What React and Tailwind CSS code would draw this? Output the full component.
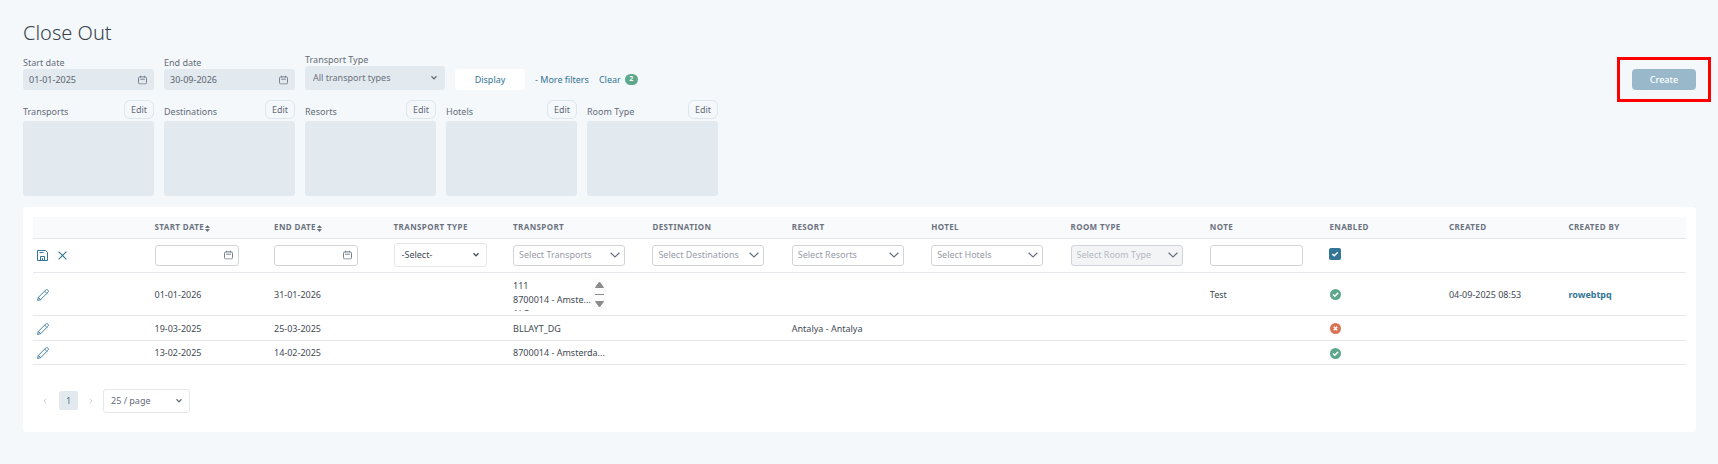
import React from "react";

function CalendarIcon({ right = "right-[6px]" }) {
  return (
    <svg className={`pointer-events-none absolute top-1/2 -translate-y-1/2 ${right}`} width="9" height="9" viewBox="0 0 9 9" fill="none" stroke="#77808d" strokeWidth="1" aria-hidden="true">
      <rect x="0.5" y="1.4" width="8" height="7.1" rx="1.3" />
      <path d="M2.5 0v2M6.5 0v2M2.2 3.7h4.6" />
    </svg>
  );
}

function Chevron({ small, right = "right-[8px]" }) {
  return small ? (
    <svg className={`pointer-events-none absolute top-1/2 -translate-y-1/2 ${right}`} width="6" height="5" viewBox="0 0 6 5" fill="none" stroke="currentColor" strokeWidth="1.3" aria-hidden="true">
      <path d="M0.5 0.8L3 3.4L5.5 0.8" />
    </svg>
  ) : (
    <svg className={`pointer-events-none absolute top-1/2 -translate-y-1/2 ${right}`} width="10" height="6" viewBox="0 0 10 6" fill="none" stroke="#667080" strokeWidth="1.2" aria-hidden="true">
      <path d="M0.6 0.8L5 5L9.4 0.8" />
    </svg>
  );
}

function SortIcon() {
  return (
    <svg className="ml-px inline-block" width="5" height="7" viewBox="0 0 5 7" fill="#6b7280" aria-hidden="true">
      <path d="M2.5 0L5 3H0Z M2.5 7L5 4H0Z" />
    </svg>
  );
}

function SaveIcon() {
  return (
    <svg width="11" height="11" viewBox="0 0 11 11" fill="none" stroke="#337596" strokeWidth="1" aria-hidden="true">
      <path d="M0.5 0.5H8.5L10.5 2.5V10.5H0.5Z" />
      <path d="M3.5 10.5V6.5H7.5V10.5M5.5 8v2M2.5 2.5h4" />
    </svg>
  );
}

function CloseIcon() {
  return (
    <svg width="9" height="9" viewBox="0 0 9 9" fill="none" stroke="#337596" strokeWidth="1.1" aria-hidden="true">
      <path d="M0.6 0.6L8.4 8.4M8.4 0.6L0.6 8.4" />
    </svg>
  );
}

function PencilIcon() {
  return (
    <svg width="12" height="12" viewBox="0 0 12 12" fill="none" stroke="#337596" strokeWidth="0.9" strokeLinejoin="round" aria-hidden="true">
      <path d="M0.6 11.4L1.3 8.4L8.7 1C9.3 0.4 10.2 0.4 10.9 1.1C11.6 1.8 11.6 2.7 11 3.3L3.6 10.7Z" />
      <path d="M7.6 2.1L9.9 4.4M1.3 8.4L3.6 10.7" />
    </svg>
  );
}

function Status({ ok }) {
  return (
    <svg className="ml-px block" width="11" height="11" viewBox="0 0 11 11" fill="none" stroke="white" strokeWidth="1.5" role="img" aria-label={ok ? "Enabled" : "Disabled"}>
      <circle cx="5.5" cy="5.5" r="5.5" fill={ok ? "#5da78a" : "#d87352"} stroke="none" />
      {ok ? <path d="M3 5.5L4.8 7.2L8.1 3.9" /> : <path d="M3.8 3.8L7.2 7.2M7.2 3.8L3.8 7.2" />}
    </svg>
  );
}

function DateFilter({ id, label, value }) {
  return (
    <div className="flex w-[131px] flex-col">
      <label htmlFor={id} className="leading-[13px]">{label}</label>
      <div className="relative">
        <input id={id} type="text" defaultValue={value} className="block h-[21px] w-full rounded-[3px] bg-[#e2eaef] pl-[6px] pr-5 text-[#5b6470] outline-none" />
        <CalendarIcon right="right-[7px]" />
      </div>
    </div>
  );
}

function ListFilter({ label }) {
  return (
    <section className="w-[131px]">
      <div className="flex h-[21px] items-start justify-between">
        <h2 className="pt-[5px] leading-[14px]">{label}</h2>
        <button type="button" aria-label={`Edit ${label}`} className="h-[19px] rounded-[6px] border border-[#dce7ec] px-[6px] leading-[17px]">Edit</button>
      </div>
      <div className="h-[75px] rounded-[3px] bg-[#e2eaef]" />
    </section>
  );
}

function RowDate({ label }) {
  return (
    <div className="relative w-[84px]">
      <input type="text" aria-label={label} className="block h-[21px] w-full rounded-[3px] border border-[#d1d5db] bg-white px-[5px] outline-none" />
      <CalendarIcon />
    </div>
  );
}

function RowSelect({ label, disabled }) {
  return (
    <div className="relative w-[112px]">
      <select
        aria-label={label}
        disabled={disabled}
        className="block h-[21px] w-full appearance-none rounded-[3px] border border-[#d1d5db] bg-white pl-[5px] pr-5 text-[#979ca8] outline-none disabled:bg-[#f3f4f6] disabled:text-[#b4b9c2] disabled:opacity-100"
      >
        <option>{label}</option>
      </select>
      <Chevron right="right-[5px]" />
    </div>
  );
}

const headings = ["", "Start date", "End date", "Transport type", "Transport", "Destination", "Resort", "Hotel", "Room type", "Note", "Enabled", "Created", "Created by"];

const closeOuts = [
  { start: "01-01-2026", end: "31-01-2026", transports: ["111", "8700014 - Amste...", "ALC"], note: "Test", ok: true, created: "04-09-2025 08:53", by: "rowebtpq", height: "h-[43px]" },
  { start: "19-03-2025", end: "25-03-2025", transport: "BLLAYT_DG", resort: "Antalya - Antalya", ok: false, height: "h-[25px]" },
  { start: "13-02-2025", end: "14-02-2025", transport: "8700014 - Amsterda...", ok: true, height: "h-[24px]" },
];

function TransportList({ items }) {
  return (
    <div className="flex h-[33px] w-[94px] overflow-hidden">
      <ul className="min-w-0 flex-1 pt-px leading-[14px]">
        {items.map((t) => <li key={t} className="whitespace-nowrap">{t}</li>)}
      </ul>
      <svg className="shrink-0 bg-[#fcfcfc]" width="15" height="33" viewBox="0 0 15 33" aria-hidden="true">
        <path d="M7.5 4L11.5 9.5H3.5Z M7.5 29L11.5 23.5H3.5Z" fill="#8b8b8b" stroke="#8b8b8b" strokeLinejoin="round" />
        <path d="M3 16.5h9" stroke="#8b8b8b" />
      </svg>
    </div>
  );
}

export default function App() {
  return (
    <main className="min-h-screen bg-[#f4f8fb] pb-8 pl-[23px] pr-[22px] pt-[19px] font-['Noto_Sans',sans-serif] text-[9px] text-[#646c78]">
      <h1 className="text-[20px] font-light leading-7 text-[#35434b]">Close Out</h1>

      <div className="flex items-end gap-[10px] pt-[6px]">
        <DateFilter id="start-date" label="Start date" value="01-01-2025" />
        <DateFilter id="end-date" label="End date" value="30-09-2026" />
        <div className="flex w-[140px] flex-col">
          <label htmlFor="transport-type" className="leading-[13px]">Transport Type</label>
          <div className="relative">
            <select id="transport-type" className="block h-[24px] w-full appearance-none rounded-[3px] bg-[#e2eaef] pl-2 pr-5 text-[#6b7280] outline-none">
              <option>All transport types</option>
            </select>
            <Chevron small />
          </div>
        </div>
        <button type="button" className="h-[21px] w-[70px] rounded-[4px] bg-white text-[#337596]">Display</button>
        <div className="flex h-[21px] items-center gap-[10px] text-[#337596]">
          <button type="button">- More filters</button>
          <button type="button" className="flex items-center gap-1">
            Clear
            <span className="flex h-[11px] w-[13px] items-center justify-center rounded-full bg-[#5da78a] text-[7px] font-bold text-white">2</span>
          </button>
        </div>
        <div className="relative ml-auto">
          <button type="button" className="block h-[21px] w-[64px] rounded-[4px] bg-[#99b9ca] font-medium text-white">Create</button>
          <div className="pointer-events-none absolute -inset-x-[15px] -inset-y-[12px] border-[3px] border-[#ff0000]" />
        </div>
      </div>

      <div className="flex gap-[10px] pt-[10px]">
        {["Transports", "Destinations", "Resorts", "Hotels", "Room Type"].map((l) => <ListFilter key={l} label={l} />)}
      </div>

      <div className="mt-[11px] rounded-[4px] bg-white p-[10px] pb-[19px]">
        <table className="w-full table-fixed border-collapse text-[#3f4a54]">
          <colgroup>
            {headings.map((h, i) => <col key={i} className={i >= 4 && i <= 8 ? "w-[8.43%]" : "w-[7.23%]"} />)}
          </colgroup>
          <thead>
            <tr className="h-[21px] border-b border-[#e5e7eb] bg-[#f9fafb] text-left text-[8px] uppercase tracking-wider text-[#6b7280]">
              {headings.map((h, i) =>
                h ? (
                  <th key={i} scope="col" className="whitespace-nowrap px-[2px] font-bold">
                    {h}
                    {(i === 1 || i === 2) && <SortIcon />}
                  </th>
                ) : (
                  <td key={i} />
                )
              )}
            </tr>
          </thead>
          <tbody className="[&_td]:px-[2px]">
            <tr className="h-[34px] border-b border-[#e5e7eb]">
              <td>
                <div className="flex items-center gap-[10px] pl-[2px]">
                  <button type="button" aria-label="Save"><SaveIcon /></button>
                  <button type="button" aria-label="Cancel"><CloseIcon /></button>
                </div>
              </td>
              <td><RowDate label="Start date" /></td>
              <td><RowDate label="End date" /></td>
              <td>
                <div className="relative w-[93px]">
                  <select aria-label="Transport type" className="block h-[24px] w-full appearance-none rounded-[3px] border border-[#e5e7eb] bg-white pl-[7px] pr-5 outline-none">
                    <option>-Select-</option>
                  </select>
                  <Chevron small />
                </div>
              </td>
              <td><RowSelect label="Select Transports" /></td>
              <td><RowSelect label="Select Destinations" /></td>
              <td><RowSelect label="Select Resorts" /></td>
              <td><RowSelect label="Select Hotels" /></td>
              <td><RowSelect label="Select Room Type" disabled /></td>
              <td><input type="text" aria-label="Note" className="block h-[21px] w-[93px] rounded-[3px] border border-[#d1d5db] px-[5px] outline-none" /></td>
              <td>
                <div className="relative mb-[3px] h-3 w-3">
                  <input type="checkbox" defaultChecked aria-label="Enabled" className="block h-3 w-3 appearance-none rounded-[2px] bg-[#337596]" />
                  <svg className="pointer-events-none absolute inset-0" width="12" height="12" viewBox="0 0 12 12" fill="none" stroke="white" strokeWidth="1.4" aria-hidden="true">
                    <path d="M3.3 6L5.2 7.8L8.8 4.3" />
                  </svg>
                </div>
              </td>
              <td />
              <td />
            </tr>
            {closeOuts.map((r) => (
              <tr key={r.start} className={`border-b border-[#e5e7eb] [&>td]:pt-[2px] ${r.height}`}>
                <td><button type="button" aria-label={`Edit ${r.start}`} className="ml-[2px] block"><PencilIcon /></button></td>
                <td>{r.start}</td>
                <td>{r.end}</td>
                <td />
                <td>{r.transports ? <TransportList items={r.transports} /> : r.transport}</td>
                <td />
                <td>{r.resort}</td>
                <td />
                <td />
                <td>{r.note}</td>
                <td><Status ok={r.ok} /></td>
                <td className="whitespace-nowrap">{r.created}</td>
                <td>{r.by && <a href="#rowebtpq" className="font-bold text-[#337596]">{r.by}</a>}</td>
              </tr>
            ))}
          </tbody>
        </table>

        <nav aria-label="Pagination" className="mt-[24px] flex items-center pl-[8px]">
          <button type="button" aria-label="Previous page" className="flex w-[18px] justify-start pl-[2px]">
            <svg width="4" height="6" viewBox="0 0 4 6" fill="none" stroke="#c9ced5" aria-hidden="true"><path d="M3.3 0.6L0.9 3L3.3 5.4" /></svg>
          </button>
          <button type="button" aria-current="page" className="h-[19px] w-[19px] rounded-[2px] bg-[#e2eaef] text-[#4f7488]">1</button>
          <button type="button" aria-label="Next page" className="flex w-[25px] justify-center">
            <svg width="4" height="6" viewBox="0 0 4 6" fill="none" stroke="#c9ced5" aria-hidden="true"><path d="M0.7 0.6L3.1 3L0.7 5.4" /></svg>
          </button>
          <div className="relative w-[87px]">
            <select aria-label="Rows per page" className="block h-[24px] w-full appearance-none rounded-[3px] border border-[#e5e7eb] bg-white pl-[7px] pr-5 outline-none">
              <option>25 / page</option>
            </select>
            <Chevron small />
          </div>
        </nav>
      </div>
    </main>
  );
}
